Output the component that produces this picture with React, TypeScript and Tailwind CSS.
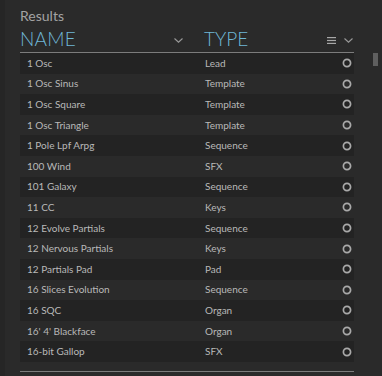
import React from "react";

const rows: [string, string][] = [
  ["1 Osc", "Lead"],
  ["1 Osc Sinus", "Template"],
  ["1 Osc Square", "Template"],
  ["1 Osc Triangle", "Template"],
  ["1 Pole Lpf Arpg", "Sequence"],
  ["100 Wind", "SFX"],
  ["101 Galaxy", "Sequence"],
  ["11 CC", "Keys"],
  ["12 Evolve Partials", "Sequence"],
  ["12 Nervous Partials", "Keys"],
  ["12 Partials Pad", "Pad"],
  ["16 Slices Evolution", "Sequence"],
  ["16 SQC", "Organ"],
  ["16' 4' Blackface", "Organ"],
  ["16-bit Gallop", "SFX"],
];

function Chevron() {
  return (
    <svg width="9" height="5" viewBox="0 0 9 5" className="block">
      <path d="M0.5 0.5 L4.5 4.2 L8.5 0.5" fill="none" stroke="#9a9a9a" strokeWidth="1.1" />
    </svg>
  );
}

function MenuIcon() {
  return (
    <svg width="9" height="7" viewBox="0 0 9 7" className="block">
      <rect x="0" y="0" width="9" height="1.2" fill="#a8a8a8" />
      <rect x="0" y="2.9" width="9" height="1.2" fill="#a8a8a8" />
      <rect x="0" y="5.8" width="9" height="1.2" fill="#a8a8a8" />
    </svg>
  );
}

function Ring() {
  return (
    <svg width="10" height="10" viewBox="0 0 10 10" className="block mr-[2px]">
      <circle cx="5" cy="5" r="3.6" fill="none" stroke="#a9a9a9" strokeWidth="1.7" />
    </svg>
  );
}

export default function App() {
  return (
    <div
      className="relative w-[382px] h-[376px] overflow-hidden bg-[#2a2a2a]"
      style={{ fontFamily: "Lato, 'Noto Sans', sans-serif" }}
    >
      <div className="absolute left-0 top-0 h-full w-[5px] bg-[#262626]" />
      <div className="pl-[20px] w-[354px]">
        <div className="pt-[7px] h-[26px] text-[14px] leading-[17px] text-[#a3a3a3]">Results</div>
        <div className="flex items-center h-[27px] border-b border-[#7c7c7c]">
          <div className="flex items-center w-[184px] pr-[21px]">
            <span className="text-[19px] leading-[22px] font-light text-[#6fb7d6] tracking-[0.2px]">NAME</span>
            <span className="ml-auto mt-[2px]">
              <Chevron />
            </span>
          </div>
          <div className="flex items-center flex-1">
            <span className="text-[19px] leading-[22px] font-light text-[#6fb7d6]">TYPE</span>
            <span className="ml-auto mt-[2px] flex items-center gap-[8px] pr-[1px]">
              <MenuIcon />
              <Chevron />
            </span>
          </div>
        </div>
        <div>
          {rows.map(([name, type], i) => (
            <div
              key={name}
              className={`flex items-center h-[20.6px] text-[10px] text-[#b9b9b9] ${
                i % 2 === 0 ? "bg-[#232323]" : ""
              }`}
            >
              <div className="w-[185px] pl-[7px]">{name}</div>
              <div className="flex-1">{type}</div>
              <Ring />
            </div>
          ))}
        </div>
        <div className="mt-[9px] h-px bg-[#7c7c7c]" />
      </div>
      <div className="absolute left-[373px] top-[53px] w-[5px] h-[13px] bg-[#5f5f5f]" />
    </div>
  );
}
